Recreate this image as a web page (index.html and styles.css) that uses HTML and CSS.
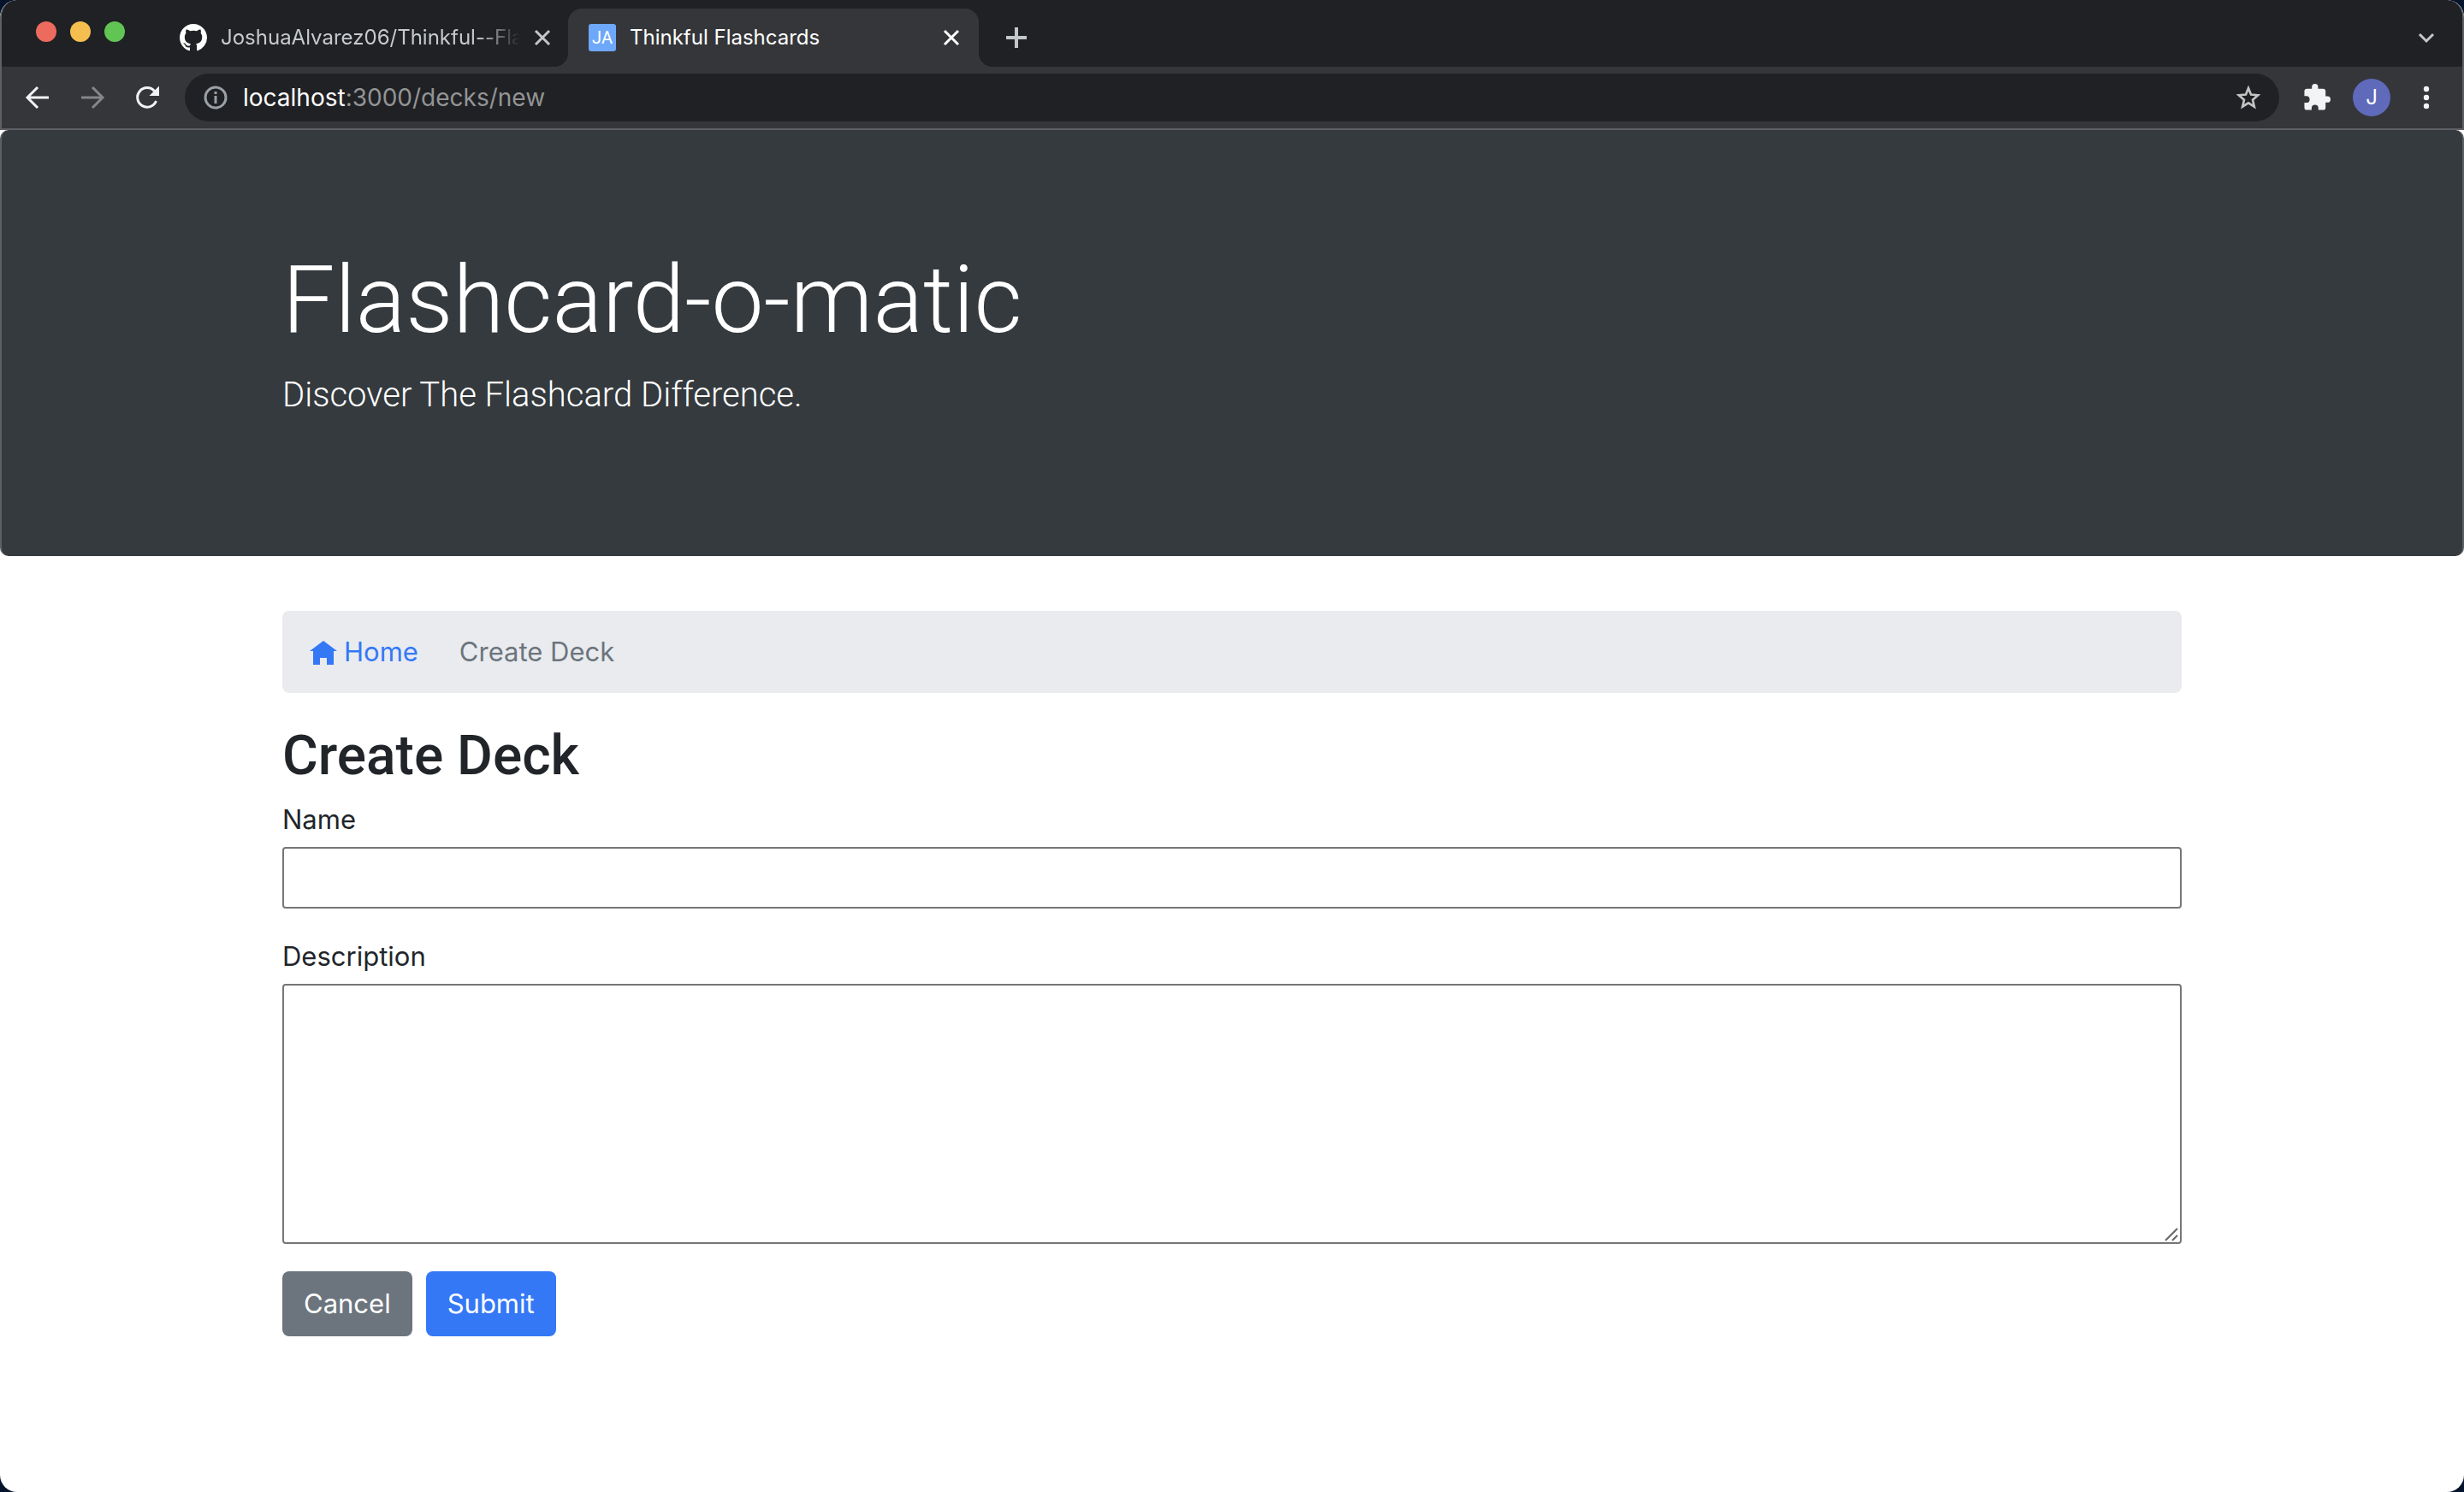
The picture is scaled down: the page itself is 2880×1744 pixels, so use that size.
FILE: index.html
```html
<!DOCTYPE html>
<html lang="en">
<head>
<meta charset="utf-8">
<title>Thinkful Flashcards</title>
<link rel="stylesheet" href="styles.css">
</head>
<body>
<div class="window">
  <header class="chrome">
    <div class="tab-strip">
      <div class="lights">
        <button class="light light-close" aria-label="Close window"></button>
        <button class="light light-min" aria-label="Minimize window"></button>
        <button class="light light-max" aria-label="Zoom window"></button>
      </div>
      <div class="tab tab-idle">
        <svg class="icon" viewBox="0 0 16 16" fill="#fff"><path d="M8 0C3.58 0 0 3.58 0 8c0 3.54 2.29 6.53 5.47 7.59.4.07.55-.17.55-.38 0-.19-.01-.82-.01-1.49-2.01.37-2.53-.49-2.69-.94-.09-.23-.48-.94-.82-1.13-.28-.15-.68-.52-.01-.53.63-.01 1.08.58 1.23.82.72 1.21 1.87.87 2.33.66.07-.52.28-.87.51-1.07-1.78-.2-3.64-.89-3.64-3.95 0-.87.31-1.59.82-2.15-.08-.2-.36-1.02.08-2.12 0 0 .67-.21 2.2.82.64-.18 1.32-.27 2-.27s1.36.09 2 .27c1.53-1.04 2.2-.82 2.2-.82.44 1.1.16 1.92.08 2.12.51.56.82 1.27.82 2.15 0 3.07-1.87 3.75-3.65 3.95.29.25.54.73.54 1.48 0 1.07-.01 1.93-.01 2.2 0 .21.15.46.55.38A8.01 8.01 0 0 0 16 8c0-4.42-3.58-8-8-8z"/></svg>
        <span class="tab-title tab-title-fade">JoshuaAlvarez06/Thinkful--Fla</span>
        <button class="icon-button" aria-label="Close tab"><svg class="icon-small" viewBox="0 0 20 20" fill="none" stroke="#c4c7ca" stroke-width="3"><path d="M2 2l16 16M18 2L2 18"/></svg></button>
      </div>
      <div class="tab tab-active">
        <span class="favicon">JA</span>
        <span class="tab-title">Thinkful Flashcards</span>
        <button class="icon-button" aria-label="Close tab"><svg class="icon-small" viewBox="0 0 20 20" fill="none" stroke="#fff" stroke-width="3"><path d="M2 2l16 16M18 2L2 18"/></svg></button>
      </div>
      <button class="icon-button new-tab" aria-label="New tab"><svg class="icon" viewBox="0 0 32 32" fill="none" stroke="#c4c7ca" stroke-width="4"><path d="M16 4v24M4 16h24"/></svg></button>
      <button class="icon-button tab-search" aria-label="Search tabs"><svg class="icon" viewBox="0 0 32 32" fill="none" stroke="#c4c7ca" stroke-width="3"><path d="M8 12l8 8 8-8"/></svg></button>
    </div>
    <div class="toolbar">
      <div class="nav-buttons">
        <button class="icon-button" aria-label="Back"><svg class="icon" viewBox="0 0 32 32" fill="none" stroke="#f1f3f4" stroke-width="3"><path d="M29 16H5M16 4L4 16l12 12"/></svg></button>
        <button class="icon-button" aria-label="Forward"><svg class="icon" viewBox="0 0 32 32" fill="none" stroke="#85868a" stroke-width="3"><path d="M3 16h24M16 4l12 12-12 12"/></svg></button>
        <button class="icon-button" aria-label="Reload"><svg class="icon" viewBox="0 0 32 32" fill="none" stroke="#f1f3f4" stroke-width="3"><path d="M26.500 20A11.300 11.300 0 1 1 24.500 8.500"/><path d="M30 2.500V14H18.500z" fill="#f1f3f4" stroke="none"/></svg></button>
      </div>
      <div class="address-bar">
        <svg class="icon" viewBox="0 0 32 32" fill="none" stroke="#9aa0a6" stroke-width="3"><circle cx="16" cy="16" r="12"/><path d="M16 14v9M16 9v3"/></svg>
        <div class="address" role="textbox" aria-label="Address"><span class="host">localhost</span>:3000/decks/new</div>
        <button class="icon-button" aria-label="Bookmark this page"><svg class="icon" viewBox="0 0 32 32" fill="none" stroke="#c4c4c4" stroke-width="2.600"><path d="M16 5l3 7.600 8.200.7-6.200 5.400 1.900 8L16 22.400 9.100 26.700l1.900-8-6.200-5.400 8.200-.7z"/></svg></button>
      </div>
      <div class="tools">
        <button class="icon-button" aria-label="Extensions"><svg class="icon" viewBox="1 1 22 22" fill="#f1f3f4"><path d="M20.500 11H19V7a2 2 0 0 0-2-2h-4V3.500a2.500 2.500 0 0 0-5 0V5H4a2 2 0 0 0-2 2v3.800h1.500a2.700 2.700 0 0 1 0 5.400H2V20a2 2 0 0 0 2 2h3.800v-1.500a2.700 2.700 0 0 1 5.400 0V22H17a2 2 0 0 0 2-2v-4h1.500a2.500 2.500 0 0 0 0-5z"/></svg></button>
        <button class="avatar">J</button>
        <button class="icon-button" aria-label="Menu"><svg class="icon" viewBox="0 0 32 32" fill="#f1f3f4"><circle cx="16" cy="6" r="3.200"/><circle cx="16" cy="16" r="3.200"/><circle cx="16" cy="26" r="3.200"/></svg></button>
      </div>
    </div>
  </header>
  <main class="page">
    <section class="jumbotron">
      <div class="container">
        <h1 class="display">Flashcard-o-matic</h1>
        <p class="lead">Discover The Flashcard Difference.</p>
      </div>
    </section>
    <div class="container">
      <nav class="breadcrumb" aria-label="Breadcrumb">
        <a class="home-link" href="#"><svg class="icon" viewBox="0 0 32 32" fill="#3478f6"><path d="M16 3L0 15h4v16h8v-8h8v8h8V15h4z"/></svg>Home</a>
        <span class="crumb">Create Deck</span>
      </nav>
      <h2 class="title">Create Deck</h2>
      <form class="form">
        <div class="field">
          <label for="name">Name</label>
          <input class="control" id="name" type="text">
        </div>
        <div class="field">
          <label for="description">Description</label>
          <div class="area-wrap">
            <textarea class="control area" id="description"></textarea>
            <svg class="grip" viewBox="0 0 16 16" fill="none" stroke="#666" stroke-width="2"><path d="M1 15L15 1M9 15l6-6"/></svg>
          </div>
        </div>
        <div class="actions">
          <button class="btn btn-secondary" type="button">Cancel</button>
          <button class="btn btn-primary" type="submit">Submit</button>
        </div>
      </form>
    </div>
  </main>
</div>
</body>
</html>
```
FILE: styles.css
```css
* { box-sizing: border-box; }

html { background: #04142b; }

body {
  margin: 0;
  font-family: Inter, "Liberation Sans", sans-serif;
  font-size: 31px;
  line-height: 48px;
  color: #212529;
}

button, input, textarea { font: inherit; }
h1, h2, p { margin: 0; }

.window {
  min-height: 100vh;
  display: flex;
  flex-direction: column;
  background: #fff;
  border-radius: 20px;
  overflow: hidden;
}

/* Browser chrome */
.chrome {
  background: #35363a;
  border: 0 solid #5f6063;
  border-width: 0 2px;
  border-radius: 20px 20px 0 0;
  overflow: hidden;
}

.tab-strip {
  display: flex;
  align-items: flex-end;
  height: 78px;
  padding: 0 26px 0 40px;
  background: #202124;
}

.lights {
  display: flex;
  gap: 16px;
  width: 144px;
  padding-bottom: 29px;
}

.light {
  width: 24px;
  height: 24px;
  padding: 0;
  border: 0;
  border-radius: 50%;
}

.light-close { background: #ed6a5e; }
.light-min { background: #f5bf4f; }
.light-max { background: #61c554; }

.icon { display: block; width: 32px; height: 32px; flex: none; }
.icon-small { display: block; width: 20px; height: 20px; }

.icon-button {
  flex: none;
  padding: 0;
  border: 0;
  background: none;
}

.tab {
  display: flex;
  align-items: center;
  gap: 16px;
  width: 480px;
  height: 68px;
  padding: 0 22px 0 24px;
  color: #c6c9cd;
  font-size: 24px;
  line-height: 32px;
}

.tab-title {
  flex: 1;
  min-width: 0;
  white-space: nowrap;
}

.tab-title-fade { mask-image: linear-gradient(to right, #000 86%, transparent); }

.tab-idle {
  width: 478px;
  padding-right: 20px;
}

.tab-active {
  position: relative;
  border-radius: 16px 16px 0 0;
  background: #35363a;
  color: #fff;
}

.tab-active::before,
.tab-active::after {
  content: "";
  position: absolute;
  bottom: 0;
  width: 16px;
  height: 16px;
}

.tab-active::before {
  right: 100%;
  background: radial-gradient(circle at 0 0, transparent 16px, #35363a 16px);
}

.tab-active::after {
  left: 100%;
  background: radial-gradient(circle at 100% 0, transparent 16px, #35363a 16px);
}

.favicon {
  width: 32px;
  height: 32px;
  border-radius: 3px;
  background: #6ea8fa;
  font-family: Roboto, sans-serif;
  font-size: 20px;
  text-align: center;
}

.new-tab { margin: 0 0 18px 28px; }
.tab-search { margin: 0 0 18px auto; }

.toolbar {
  display: flex;
  align-items: center;
  gap: 28px;
  height: 74px;
  padding: 0 26px;
  border-bottom: 2px solid #5f6063;
}

.nav-buttons { display: flex; gap: 32px; }
.tools { display: flex; align-items: center; gap: 26px; }

.address-bar {
  flex: 1;
  display: flex;
  align-items: center;
  gap: 16px;
  height: 56px;
  padding: 0 20px;
  border-radius: 28px;
  background: #202124;
}

.address {
  flex: 1;
  color: #939496;
  font-size: 28px;
  line-height: 40px;
}

.host { color: #fff; }

.avatar {
  width: 44px;
  height: 44px;
  padding: 0;
  border: 0;
  border-radius: 50%;
  background: #5f6abb;
  color: #fff;
  font-size: 24px;
  line-height: 44px;
}

/* Page */
.container {
  max-width: 2280px;
  margin: 0 auto;
  padding: 0 30px;
}

.jumbotron {
  margin-bottom: 64px;
  padding: 132px 0 158px;
  border-radius: 10px;
  border: 0 solid #5f6063;
  border-width: 0 2px;
  background: #353a3e;
  color: #fff;
}

.display,
.lead,
.title { font-family: Roboto, Inter, sans-serif; }

.display {
  margin-bottom: 14px;
  font-size: 109px;
  font-weight: 300;
  line-height: 134px;
}

.lead {
  font-size: 40px;
  font-weight: 300;
  line-height: 60px;
}

.breadcrumb {
  display: flex;
  gap: 48px;
  margin-bottom: 36px;
  padding: 24px 32px;
  border-radius: 8px;
  background: #e9ebef;
}

.home-link {
  display: flex;
  align-items: center;
  gap: 8px;
  color: #3478f6;
  text-decoration: none;
}

.crumb { color: #6c757d; }

.title {
  margin-bottom: 12px;
  font-size: 64px;
  font-weight: 500;
  line-height: 76px;
}

.field {
  display: flex;
  flex-direction: column;
  gap: 8px;
  margin-bottom: 32px;
}

.control {
  display: block;
  width: 100%;
  height: 72px;
  padding: 4px 12px;
  border: 2px solid #767676;
  border-radius: 4px;
  background: #fff;
  color: inherit;
}

.area-wrap { position: relative; }
.area { height: 304px; resize: none; }

.grip {
  position: absolute;
  right: 4px;
  bottom: 3px;
  width: 16px;
  height: 16px;
}

.actions { display: flex; gap: 16px; }

.btn {
  padding: 14px 25px;
  border: 0;
  border-radius: 8px;
  color: #fff;
}

.btn-secondary { background: #6c757d; }
.btn-primary { background: #3478f6; }
```
